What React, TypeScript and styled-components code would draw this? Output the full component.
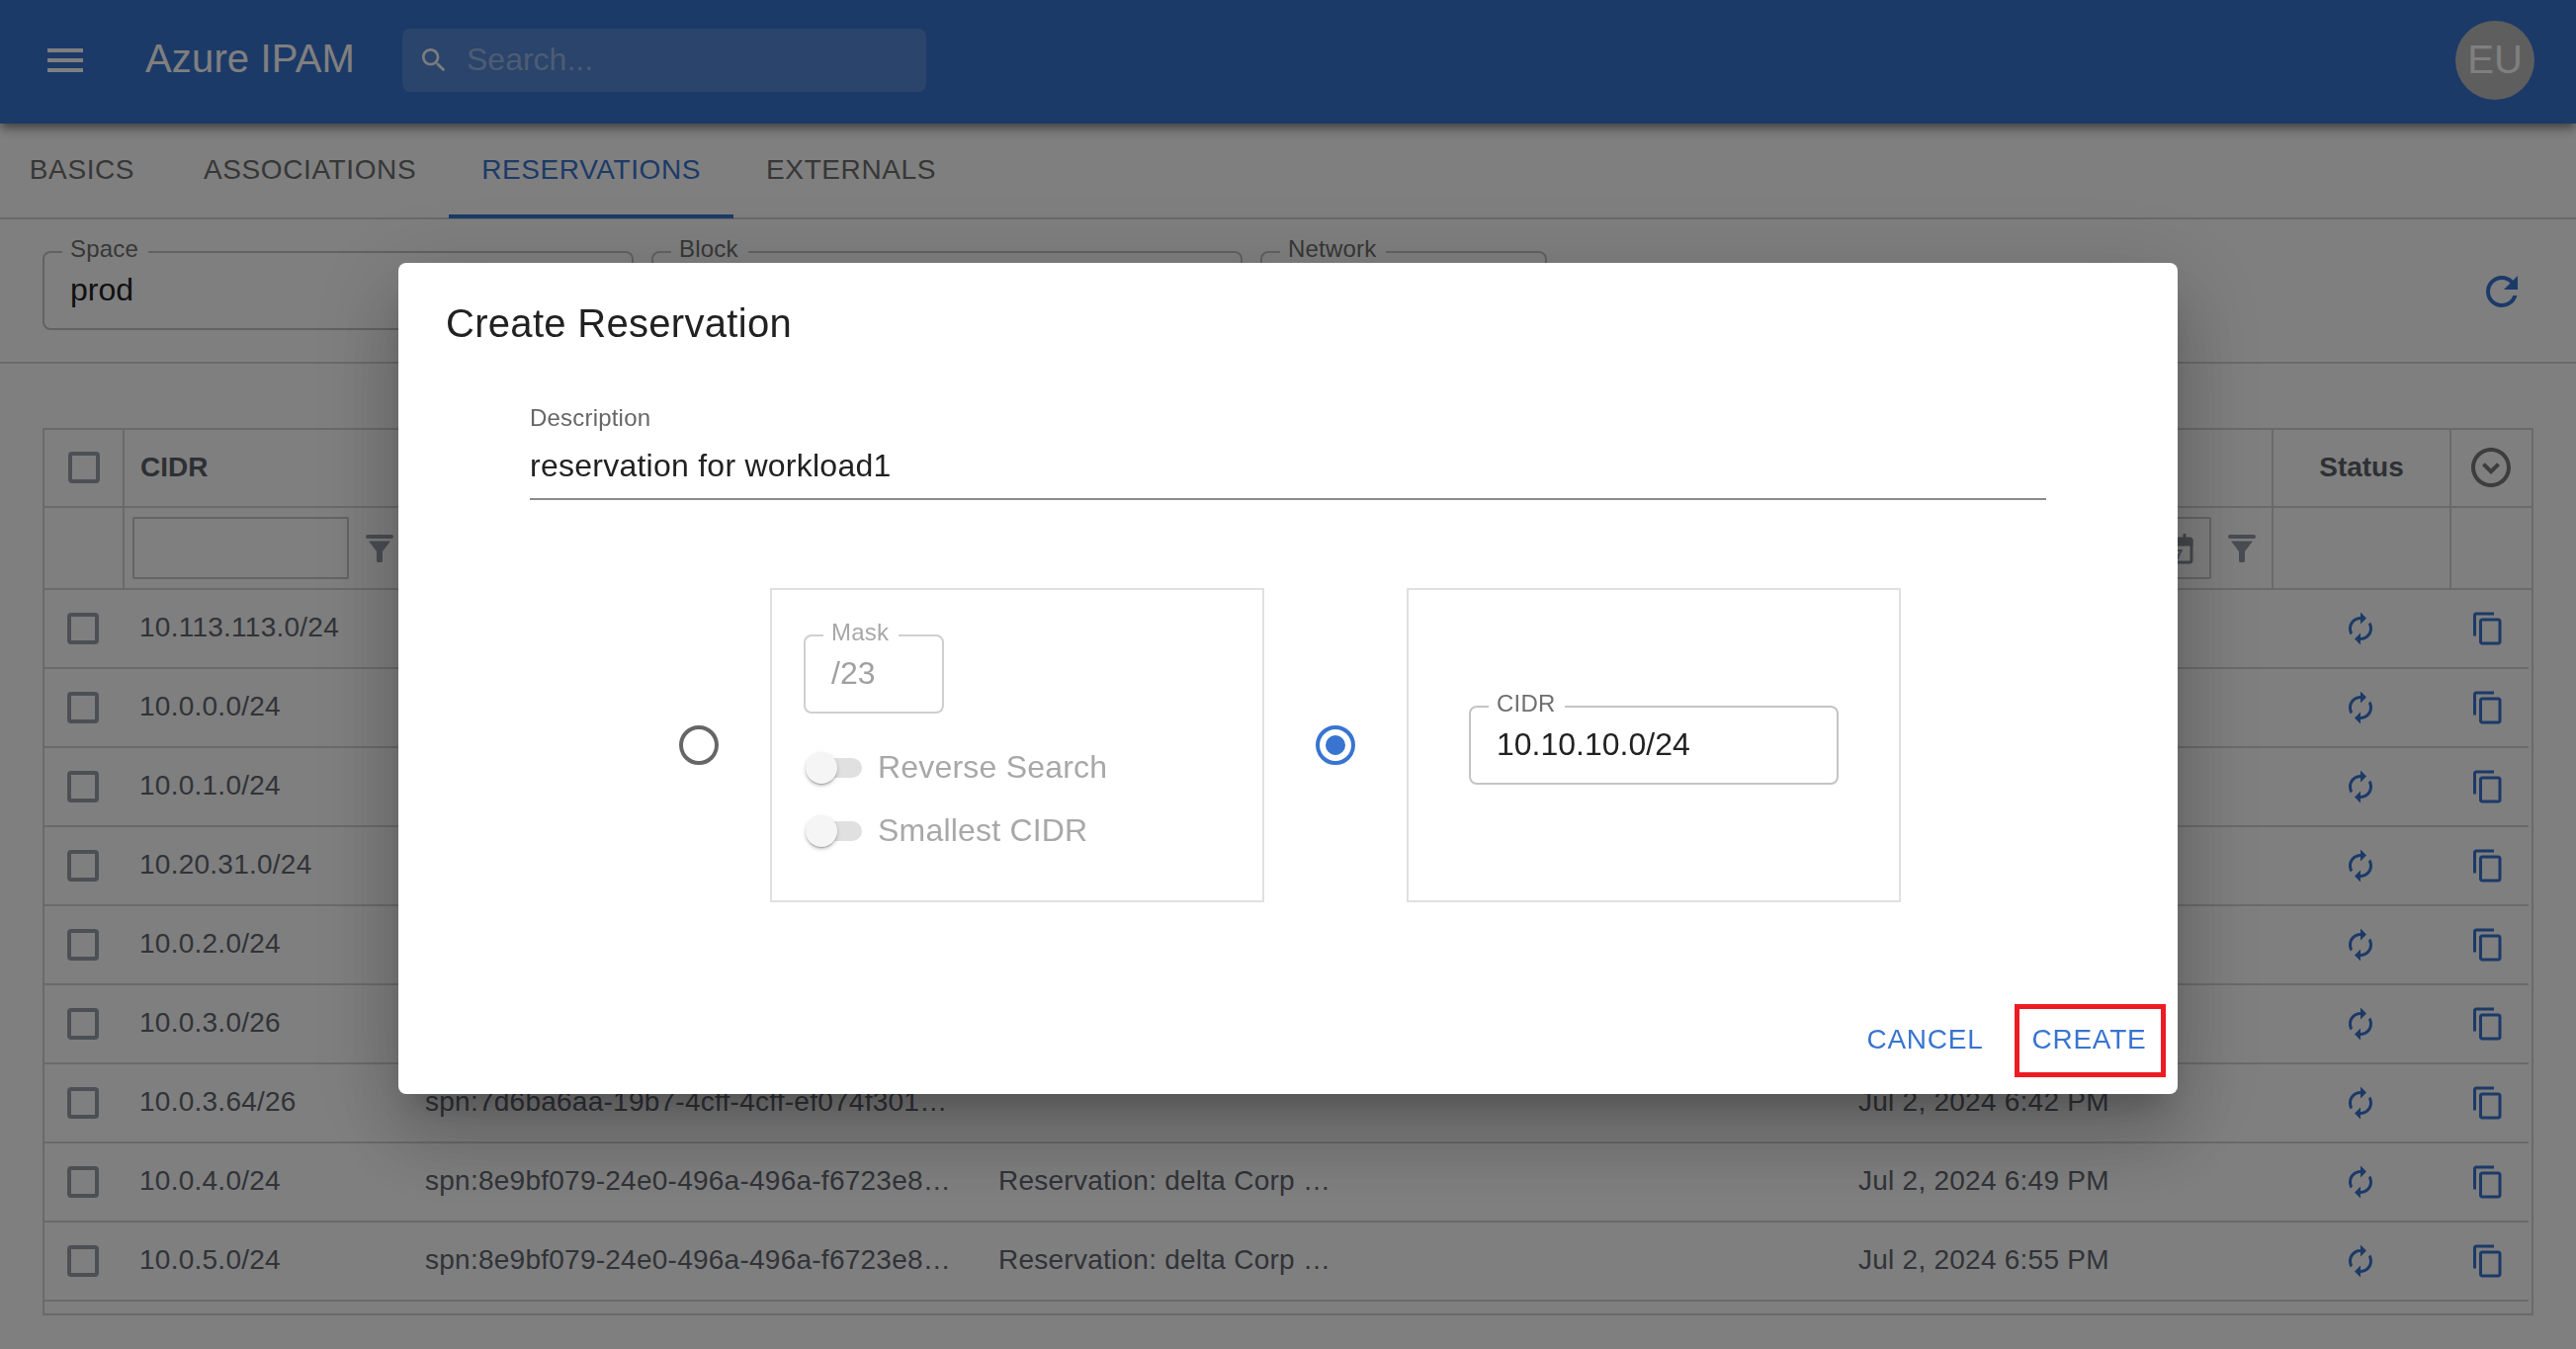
import styled, { createGlobalStyle } from "styled-components";

const primary = "#3874d0";
const line = "#d5d5d5";
const tableColumns = "81px 288px 580px 870px 436px 180px 1fr";

const GlobalStyle = createGlobalStyle`
  html, body {
    margin: 0;
    padding: 0;
    height: 100%;
    overflow: hidden;
    background: #ffffff;
    font-family: "Liberation Sans", Arial, sans-serif;
  }
  * {
    box-sizing: border-box;
  }
`;

const Page = styled.div`
  width: 2606px;
  height: 1365px;
  background: #ffffff;
`;

const AppBar = styled.header`
  position: relative;
  z-index: 1;
  height: 125px;
  padding: 0 42px 3px 42px;
  display: flex;
  align-items: center;
  background: ${primary};
  box-shadow: 0 4px 8px -2px rgba(0, 0, 0, 0.4), 0 8px 10px 0 rgba(0, 0, 0, 0.2);
  color: #ffffff;
`;

const Brand = styled.div`
  margin: 0 0 3px 57px;
  width: 260px;
  font-size: 40px;
  letter-spacing: 0.15px;
`;

const SearchBox = styled.div`
  width: 530px;
  height: 64px;
  padding-left: 16px;
  display: flex;
  align-items: center;
  gap: 17px;
  background: rgba(255, 255, 255, 0.15);
  border-radius: 8px;
  font-size: 32px;
  color: rgba(255, 255, 255, 0.42);
`;

const SearchText = styled.span`
  margin-bottom: 2px;
`;

const SearchIcon = styled.svg`
  width: 32px;
  height: 32px;
  fill: rgba(255, 255, 255, 0.95);
`;

const Avatar = styled.div`
  margin-left: auto;
  width: 80px;
  height: 80px;
  padding-bottom: 2px;
  border-radius: 50%;
  display: flex;
  align-items: center;
  justify-content: center;
  background: #bdbdbd;
  font-size: 40px;
  color: #ffffff;
`;

const TabBar = styled.nav`
  height: 97px;
  display: flex;
  border-bottom: 2px solid ${line};
  margin-left: -7px;
`;

const Tab = styled.div<{ $active?: boolean }>`
  min-width: 180px;
  padding: 2px 33px 0;
  display: flex;
  align-items: center;
  justify-content: center;
  font-size: 28px;
  letter-spacing: 0.6px;
  color: ${(p) => (p.$active ? primary : "#6e6e6e")};
  border-bottom: 4px solid ${(p) => (p.$active ? primary : "transparent")};
  margin-bottom: -1px;
`;

const Toolbar = styled.section`
  height: 146px;
  padding: 0 51px 0 43px;
  display: flex;
  align-items: center;
  gap: 18px;
  border-bottom: 2px solid ${line};
`;

const Field = styled.div<{ $width: number; $muted?: boolean }>`
  position: relative;
  flex: none;
  width: ${(p) => p.$width}px;
  height: 80px;
  padding-left: 26px;
  display: flex;
  align-items: center;
  border: 2px solid ${(p) => (p.$muted ? "#cfcfcf" : "#c4c4c4")};
  border-radius: 8px;
  font-size: 32px;
  color: ${(p) => (p.$muted ? "#a0a0a0" : "#222222")};
`;

const FieldLabel = styled.label<{ $muted?: boolean }>`
  position: absolute;
  top: -16px;
  left: 18px;
  padding: 0 10px 0 8px;
  background: #ffffff;
  font-size: 24px;
  line-height: 24px;
  letter-spacing: 0.2px;
  color: ${(p) => (p.$muted ? "#a8a8a8" : "#6f6f6f")};
`;

const FieldValue = styled.span`
  line-height: 36px;
  margin-bottom: 3px;
`;

const RefreshIcon = styled.svg`
  margin: 2px 0 0 auto;
  width: 48px;
  height: 48px;
  fill: ${primary};
`;

const Content = styled.main`
  padding: 65px 43px 0;
`;

const Table = styled.div`
  width: 2520px;
  height: 898px;
  border: 2px solid ${line};
`;

const HeaderRow = styled.div`
  height: 79px;
  display: grid;
  grid-template-columns: ${tableColumns};
  border-bottom: 2px solid ${line};
`;

const FilterRow = styled(HeaderRow)`
  height: 83px;
`;

const HeaderCell = styled.div<{ $center?: boolean }>`
  padding: 0 0 2px ${(p) => (p.$center ? 0 : 16)}px;
  display: flex;
  align-items: center;
  justify-content: ${(p) => (p.$center ? "center" : "flex-start")};
  border-right: 2px solid ${line};
  font-size: 28px;
  font-weight: 700;
  color: #5c6069;

  &:last-child {
    border-right: 0;
  }
`;

const FilterCell = styled.div<{ $wide?: boolean }>`
  padding: 0 ${(p) => (p.$wide ? 16 : 14)}px 0 8px;
  display: flex;
  align-items: center;
  gap: 17px;
  border-right: 2px solid ${line};

  &:last-child {
    border-right: 0;
  }
`;

const FilterInput = styled.div`
  flex: 1;
  height: 63px;
  padding-right: 15px;
  display: flex;
  align-items: center;
  justify-content: flex-end;
  border: 2px solid #c8c8c8;
  border-radius: 2px;
`;

const FilterIcon = styled.svg`
  flex: none;
  width: 28px;
  height: 28px;
  fill: #939aa5;
`;

const CalendarIcon = styled.svg`
  width: 32px;
  height: 32px;
  fill: none;
  stroke: #8a8f98;
`;

const Row = styled.div`
  height: 80px;
  margin-right: 3px;
  display: grid;
  grid-template-columns: ${tableColumns};
  align-items: center;
  border-bottom: 2px solid ${line};
  font-size: 28px;
  letter-spacing: 0.25px;
  color: #626771;
`;

const BoxCell = styled.div`
  display: flex;
  justify-content: center;
  padding-right: 3px;
`;

const Checkbox = styled.div`
  width: 32px;
  height: 32px;
  border: 4px solid #99a0ab;
  border-radius: 4px;
`;

const TextCell = styled.div`
  padding: 0 0 3px 16px;
  white-space: nowrap;
  overflow: hidden;
`;

const CidrCell = styled(TextCell)`
  padding-left: 15px;
`;

const IconCell = styled.div`
  display: flex;
  justify-content: center;
  padding-right: 4px;
`;

const ActionIcon = styled.svg`
  width: 36px;
  height: 36px;
  fill: ${primary};
`;

const ExpandIcon = styled.svg`
  margin-right: 2px;
  width: 48px;
  height: 48px;
  fill: #7b7b7b;
`;

const Backdrop = styled.div`
  position: fixed;
  inset: 0;
  z-index: 10;
  padding-top: 8px;
  display: flex;
  align-items: center;
  justify-content: center;
  background: rgba(0, 0, 0, 0.5);
`;

const Dialog = styled.div`
  width: 1800px;
  height: 841px;
  display: flex;
  flex-direction: column;
  background: #ffffff;
  border-radius: 8px;
  box-shadow: 0 22px 30px -14px rgba(0, 0, 0, 0.2), 0 48px 76px 6px rgba(0, 0, 0, 0.14),
    0 18px 92px 16px rgba(0, 0, 0, 0.12);
`;

const DialogTitle = styled.h2`
  margin: 37px 0 0 48px;
  height: 48px;
  font-size: 40px;
  line-height: 48px;
  font-weight: 400;
  letter-spacing: 0.3px;
  color: #212121;
`;

const Description = styled.div`
  margin: 58px 133px 0;
  border-bottom: 2px solid #8b8b8b;
`;

const DescriptionLabel = styled.div`
  font-size: 24px;
  line-height: 28px;
  letter-spacing: 0.2px;
  color: #666666;
`;

const DescriptionValue = styled.div`
  margin: 14px 0 13px;
  font-size: 32px;
  line-height: 40px;
  letter-spacing: 0.25px;
  color: #212121;
`;

const Options = styled.div`
  margin-top: 89px;
  padding-left: 4px;
  display: flex;
  align-items: center;
  justify-content: center;
  gap: 52px;
`;

const Radio = styled.div<{ $checked?: boolean }>`
  width: 40px;
  height: 40px;
  display: flex;
  align-items: center;
  justify-content: center;
  border: 4px solid ${(p) => (p.$checked ? primary : "#666666")};
  border-radius: 50%;

  &::before {
    content: "";
    display: ${(p) => (p.$checked ? "block" : "none")};
    width: 20px;
    height: 20px;
    border-radius: 50%;
    background: ${primary};
  }
`;

const OptionBox = styled.div`
  width: 500px;
  height: 318px;
  border: 2px solid #e0e0e0;
`;

const MaskBox = styled(OptionBox)`
  padding: 45px 0 0 32px;
`;

const SwitchList = styled.div`
  margin-top: 23px;
`;

const CidrBox = styled(OptionBox)`
  display: flex;
  align-items: center;
  justify-content: center;
`;

const SwitchRow = styled.div`
  height: 64px;
  display: flex;
  align-items: center;
  gap: 16px;
  font-size: 32px;
  letter-spacing: 0.2px;
  color: #a8a8a8;
`;

const SwitchLabel = styled.span`
  margin-bottom: 2px;
`;

const SwitchTrack = styled.div`
  position: relative;
  margin-left: 2px;
  width: 57px;
  height: 20px;
  border-radius: 10px;
  background: #e0e0e0;

  &::before {
    content: "";
    position: absolute;
    top: -6px;
    left: 0;
    width: 32px;
    height: 32px;
    border-radius: 50%;
    background: #f5f5f5;
    box-shadow: 0 2px 2px -1px rgba(0, 0, 0, 0.3), 0 2px 4px 0 rgba(0, 0, 0, 0.2);
  }
`;

const Actions = styled.div`
  margin-top: 103px;
  padding-right: 12px;
  display: flex;
  justify-content: flex-end;
  align-items: center;
`;

const DialogButton = styled.button<{ $highlight?: boolean }>`
  height: 74px;
  width: ${(p) => (p.$highlight ? 153 : 119)}px;
  margin-left: ${(p) => (p.$highlight ? 31 : 0)}px;
  padding: 0 ${(p) => (p.$highlight ? 2 : 0)}px 2px 0;
  background: none;
  border: ${(p) => (p.$highlight ? "5px solid #ed1c24" : "0")};
  font-family: inherit;
  font-size: 28px;
  letter-spacing: 0.75px;
  color: ${primary};
`;

// only the cells that show around the open dialog are filled in
const rows = [
  ["10.113.113.0/24", "", "", ""],
  ["10.0.0.0/24", "", "", ""],
  ["10.0.1.0/24", "", "", ""],
  ["10.20.31.0/24", "", "", ""],
  ["10.0.2.0/24", "", "", ""],
  ["10.0.3.0/26", "", "", ""],
  ["10.0.3.64/26", "spn:7d6ba6aa-19b7-4cff-4cff-ef074f301…", "", "Jul 2, 2024 6:42 PM"],
  ["10.0.4.0/24", "spn:8e9bf079-24e0-496a-496a-f6723e8…", "Reservation: delta Corp …", "Jul 2, 2024 6:49 PM"],
  ["10.0.5.0/24", "spn:8e9bf079-24e0-496a-496a-f6723e8…", "Reservation: delta Corp …", "Jul 2, 2024 6:55 PM"],
];

const Funnel = () => (
  <FilterIcon viewBox="0 0 28 28">
    <rect x="0" y="0" width="28" height="4" rx="2" />
    <path d="M3 6.5h22l-8 10.5v9.5c0 .8-.7 1.5-1.5 1.5h-3c-.8 0-1.5-.7-1.5-1.5V17z" />
  </FilterIcon>
);

const App = () => {
  return (
    <>
      <GlobalStyle />
      <Page>
        <AppBar>
          <svg width="48" height="48" viewBox="0 0 24 24" fill="#ffffff">
            <path d="M3 18h18v-2H3v2zm0-5h18v-2H3v2zm0-7v2h18V6H3z" />
          </svg>
          <Brand>Azure IPAM</Brand>
          <SearchBox>
            <SearchIcon viewBox="0 0 24 24">
              <path d="M15.5 14h-.79l-.28-.27C15.41 12.59 16 11.11 16 9.5 16 5.91 13.09 3 9.5 3S3 5.91 3 9.5 5.91 16 9.5 16c1.61 0 3.09-.59 4.23-1.57l.27.28v.79l5 4.99L20.49 19l-4.99-5zm-6 0C7.01 14 5 11.99 5 9.5S7.01 5 9.5 5 14 7.01 14 9.5 11.99 14 9.5 14z" />
            </SearchIcon>
            <SearchText>Search...</SearchText>
          </SearchBox>
          <Avatar>EU</Avatar>
        </AppBar>

        <TabBar>
          <Tab>BASICS</Tab>
          <Tab>ASSOCIATIONS</Tab>
          <Tab $active>RESERVATIONS</Tab>
          <Tab>EXTERNALS</Tab>
        </TabBar>

        <Toolbar>
          <Field $width={598}>
            <FieldLabel>Space</FieldLabel>
            <FieldValue>prod</FieldValue>
          </Field>
          <Field $width={598}>
            <FieldLabel>Block</FieldLabel>
          </Field>
          <Field $width={290}>
            <FieldLabel>Network</FieldLabel>
          </Field>
          <RefreshIcon viewBox="0 0 24 24">
            <path d="M17.65 6.35C16.2 4.9 14.21 4 12 4c-4.42 0-7.99 3.58-7.99 8s3.57 8 7.99 8c3.73 0 6.84-2.55 7.73-6h-2.08c-.82 2.33-3.04 4-5.65 4-3.31 0-6-2.69-6-6s2.69-6 6-6c1.66 0 3.14.69 4.22 1.78L13 11h7V4l-2.35 2.35z" />
          </RefreshIcon>
        </Toolbar>

        <Content>
          <Table>
            <HeaderRow>
              <HeaderCell $center>
                <Checkbox />
              </HeaderCell>
              <HeaderCell>CIDR</HeaderCell>
              <HeaderCell />
              <HeaderCell />
              <HeaderCell />
              <HeaderCell $center>Status</HeaderCell>
              <HeaderCell $center>
                <ExpandIcon viewBox="0 0 24 24">
                  <path d="M15.08 9.59 12 12.67 8.92 9.59 7.5 11l4.5 4.5 4.5-4.5-1.42-1.41zM12 2C6.48 2 2 6.48 2 12s4.48 10 10 10 10-4.48 10-10S17.52 2 12 2zm0 18c-4.42 0-8-3.58-8-8s3.58-8 8-8 8 3.58 8 8-3.58 8-8 8z" />
                </ExpandIcon>
              </HeaderCell>
            </HeaderRow>
            <FilterRow>
              <FilterCell />
              <FilterCell>
                <FilterInput />
                <Funnel />
              </FilterCell>
              <FilterCell>
                <FilterInput />
                <Funnel />
              </FilterCell>
              <FilterCell>
                <FilterInput />
                <Funnel />
              </FilterCell>
              <FilterCell $wide>
                <FilterInput>
                  <CalendarIcon viewBox="0 0 32 32">
                    <rect x="3" y="6" width="26" height="24" rx="2" strokeWidth="3" />
                    <path d="M3 8h26v4H3z" fill="#8a8f98" strokeWidth="3" />
                    <path d="M10 1v6M22 1v6" strokeWidth="3" />
                    <text x="16" y="27" fontSize="15" fontWeight="700" textAnchor="middle" fill="#8a8f98" stroke="none">
                      7
                    </text>
                  </CalendarIcon>
                </FilterInput>
                <Funnel />
              </FilterCell>
              <FilterCell />
              <FilterCell />
            </FilterRow>
            {rows.map(([cidr, user, desc, date]) => (
              <Row key={cidr}>
                <BoxCell>
                  <Checkbox />
                </BoxCell>
                <CidrCell>{cidr}</CidrCell>
                <TextCell>{user}</TextCell>
                <TextCell>{desc}</TextCell>
                <TextCell>{date}</TextCell>
                <IconCell>
                  <ActionIcon viewBox="0 0 24 24">
                    <path d="M12 6v3l4-4-4-4v3c-4.42 0-8 3.58-8 8 0 1.57.46 3.03 1.24 4.26L6.7 14.8c-.45-.83-.7-1.79-.7-2.8 0-3.31 2.69-6 6-6zm6.76 1.74L17.3 9.2c.44.84.7 1.79.7 2.8 0 3.31-2.69 6-6 6v-3l-4 4 4 4v-3c4.42 0 8-3.58 8-8 0-1.57-.46-3.03-1.24-4.26z" />
                  </ActionIcon>
                </IconCell>
                <IconCell>
                  <ActionIcon viewBox="0 0 24 24">
                    <path d="M16 1H4c-1.1 0-2 .9-2 2v14h2V3h12V1zm3 4H8c-1.1 0-2 .9-2 2v14c0 1.1.9 2 2 2h11c1.1 0 2-.9 2-2V7c0-1.1-.9-2-2-2zm0 16H8V7h11v14z" />
                  </ActionIcon>
                </IconCell>
              </Row>
            ))}
          </Table>
        </Content>
      </Page>

      <Backdrop>
        <Dialog>
          <DialogTitle>Create Reservation</DialogTitle>
          <Description>
            <DescriptionLabel>Description</DescriptionLabel>
            <DescriptionValue>reservation for workload1</DescriptionValue>
          </Description>
          <Options>
            <Radio />
            <MaskBox>
              <Field $width={142} $muted>
                <FieldLabel $muted>Mask</FieldLabel>
                <FieldValue>/23</FieldValue>
              </Field>
              <SwitchList>
                <SwitchRow>
                  <SwitchTrack />
                  <SwitchLabel>Reverse Search</SwitchLabel>
                </SwitchRow>
                <SwitchRow>
                  <SwitchTrack />
                  <SwitchLabel>Smallest CIDR</SwitchLabel>
                </SwitchRow>
              </SwitchList>
            </MaskBox>
            <Radio $checked />
            <CidrBox>
              <Field $width={374}>
                <FieldLabel>CIDR</FieldLabel>
                <FieldValue>10.10.10.0/24</FieldValue>
              </Field>
            </CidrBox>
          </Options>
          <Actions>
            <DialogButton>CANCEL</DialogButton>
            <DialogButton $highlight>CREATE</DialogButton>
          </Actions>
        </Dialog>
      </Backdrop>
    </>
  );
};

export default App;
